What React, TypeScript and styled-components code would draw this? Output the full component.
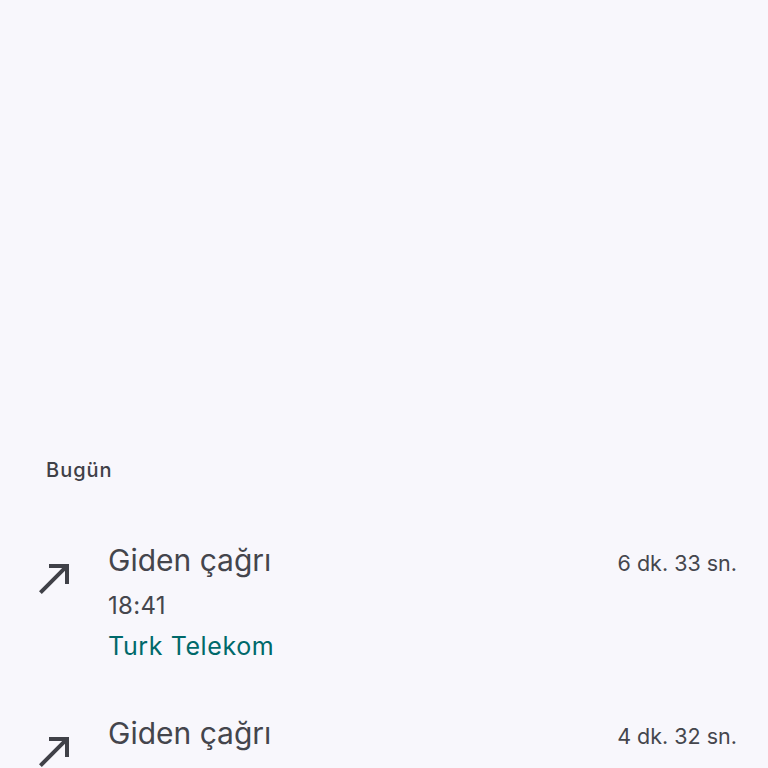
import React from 'react'
import styled, { createGlobalStyle } from 'styled-components'

const GlobalStyle = createGlobalStyle`
  html, body {
    margin: 0;
    padding: 0;
    background: #f8f7fc;
    overflow: hidden;
  }
  * { box-sizing: border-box; }
`

type Call = {
  title: string
  time: string
  carrier: string
  duration: string
}

const calls: Call[] = [
  { title: 'Giden çağrı', time: '18:41', carrier: 'Turk Telekom', duration: '6 dk. 33 sn.' },
  { title: 'Giden çağrı', time: '18:40', carrier: 'Turk Telekom', duration: '4 dk. 32 sn.' },
]

const OutgoingIcon = () => (
  <SIcon width="48" height="48" viewBox="0 0 24 24" fill="#404148">
    <path d="M9 5v2h6.59L4 18.59 5.41 20 17 8.41V15h2V5z" />
  </SIcon>
)

const App = () => {
  return (
    <>
      <GlobalStyle />
      <SScreen>
        <SSectionTitle>Bugün</SSectionTitle>
        <SList>
          {calls.map((c, i) => (
            <SRow key={i}>
              <SIconCell>
                <OutgoingIcon />
              </SIconCell>
              <SInfo>
                <STitle>{c.title}</STitle>
                <STime>{c.time}</STime>
                <SCarrier>{c.carrier}</SCarrier>
              </SInfo>
              <SDuration>{c.duration}</SDuration>
            </SRow>
          ))}
        </SList>
      </SScreen>
    </>
  )
}

const SScreen = styled.div`
  height: 768px;
  overflow: hidden;
  background: #f8f7fc;
  padding-top: 456px;
  font-family: Inter, Roboto, sans-serif;
  color: #44454c;
`

const SSectionTitle = styled.div`
  padding-left: 46px;
  font-size: 20px;
  font-weight: 500;
  letter-spacing: 1px;
  line-height: 28px;
  color: #3f4047;
  margin-bottom: 30px;
`

const SList = styled.div`
  display: flex;
  flex-direction: column;
`

const SRow = styled.div`
  display: grid;
  grid-template-columns: 48px 1fr auto;
  column-gap: 29px;
  padding: 22px 31px 21px 31px;
`

const SIconCell = styled.div`
  padding-top: 18px;
`

const SIcon = styled.svg`
  display: block;
`

const SInfo = styled.div`
  display: flex;
  flex-direction: column;
`

const STitle = styled.div`
  font-size: 30px;
  line-height: 48px;
  color: #44454c;
`

const STime = styled.div`
  margin-top: 2px;
  font-size: 24px;
  letter-spacing: 0.3px;
  line-height: 40px;
  color: #45464d;
`

const SCarrier = styled.div`
  font-size: 25px;
  letter-spacing: 0.6px;
  line-height: 40px;
  color: #00696a;
`

const SDuration = styled.div`
  padding-top: 3px;
  font-size: 21.5px;
  line-height: 48px;
  color: #45464d;
`

export default App
